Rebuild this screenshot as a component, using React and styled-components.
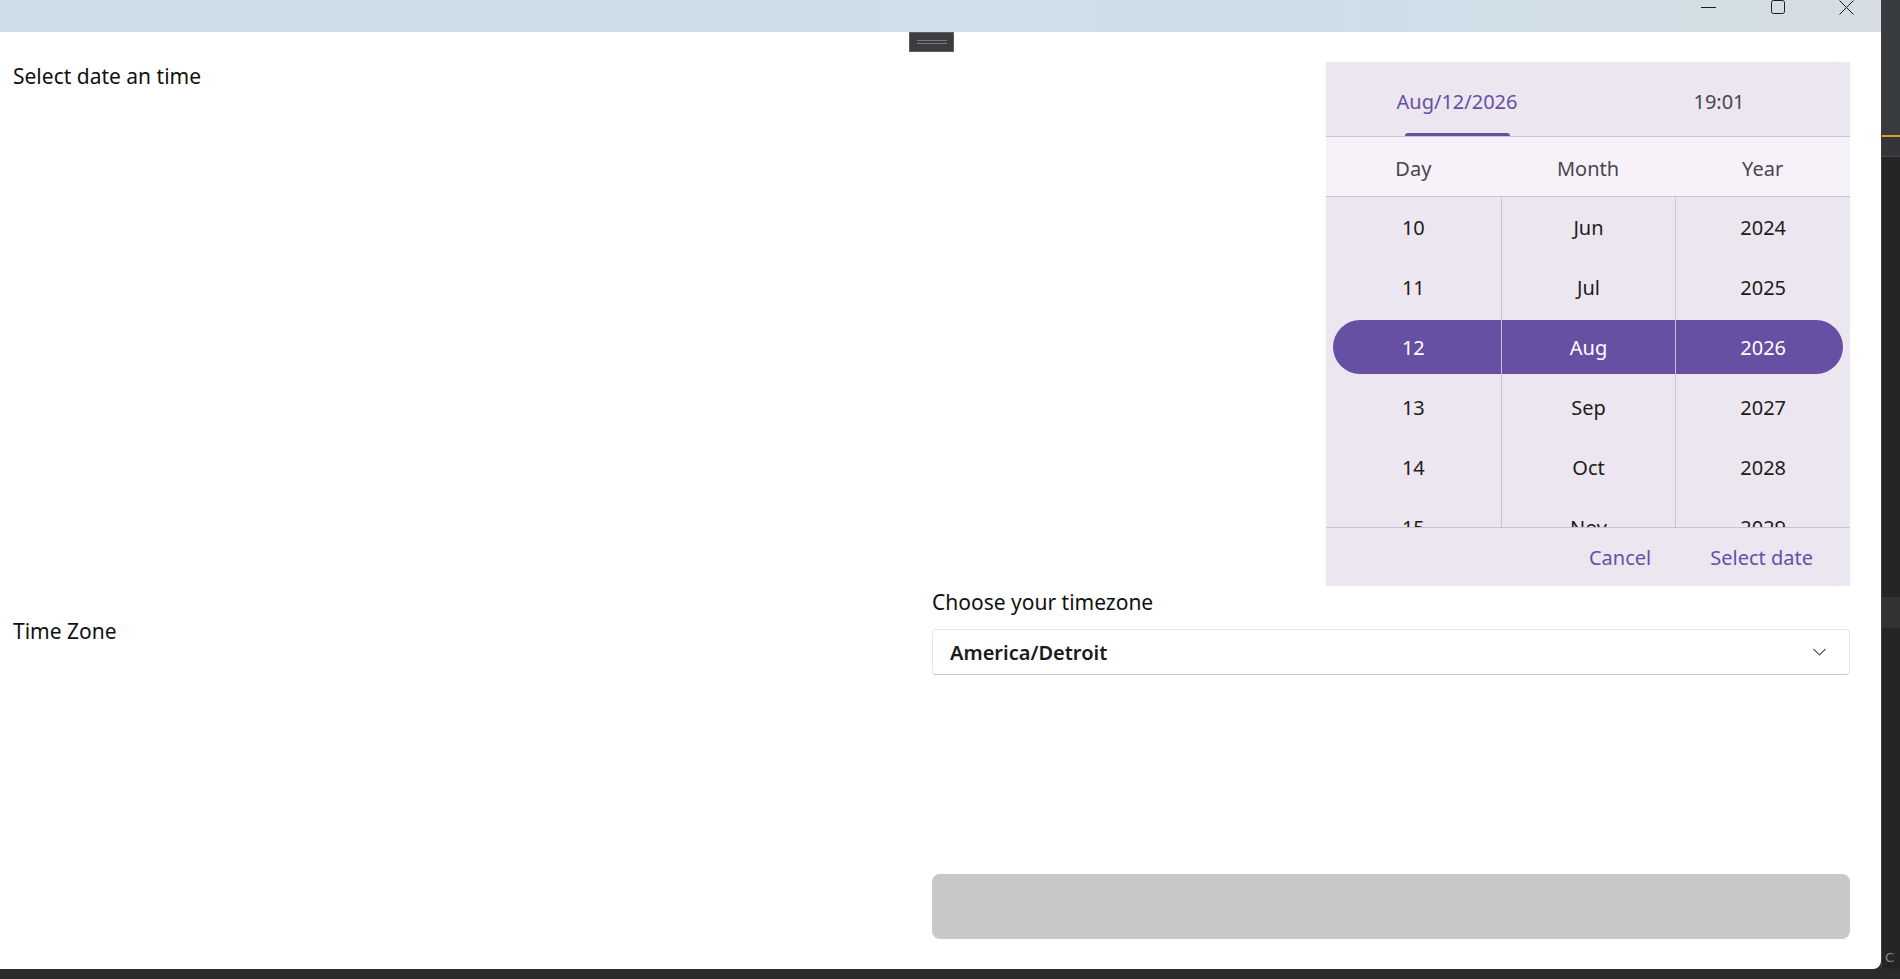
import React from 'react';
import styled, { createGlobalStyle } from 'styled-components';

const Global = createGlobalStyle`
  html, body { margin: 0; padding: 0; background: #2b2b2b; overflow: hidden; }
  body { font-family: "Noto Sans", "Open Sans", sans-serif; }
  * { box-sizing: border-box; }
`;

const Screen = styled.div`
  width: 1900px;
  height: 979px;
  display: grid;
  grid-template-columns: 1881px 19px;
  grid-template-rows: 969px 10px;
  background: #2b2b2b;
`;

const Window = styled.div`
  position: relative;
  display: flex;
  flex-direction: column;
  background: #ffffff;
  border-bottom-right-radius: 8px;
  overflow: hidden;
`;

const TitleBar = styled.div`
  height: 32px;
  flex: none;
  display: flex;
  justify-content: flex-end;
  align-items: flex-start;
  background: linear-gradient(90deg, #cfdcea 0%, #cddeea 70%, #d5dde2 100%);
`;

const ControlButton = styled.div`
  width: 69px;
  height: 15px;
  display: flex;
  align-items: center;
  justify-content: center;
  color: #1b1b1b;
`;

const DragHandle = styled.div`
  position: absolute;
  left: 909px;
  top: 32px;
  width: 45px;
  height: 20px;
  background: #3b3d40;
  border: 1px solid #5e5e5e;
  display: flex;
  flex-direction: column;
  align-items: center;
  justify-content: center;
  gap: 2px;
`;

const HandleLine = styled.div`
  width: 30px;
  height: 1px;
  background: #7a7a7a;
`;

const Content = styled.div`
  flex: 1;
  display: grid;
  grid-template-columns: 1fr 918px;
  grid-template-rows: auto auto 1fr auto;
  padding: 30px 31px 30px 13px;
`;

const FieldLabel = styled.div`
  font-size: 21px;
  line-height: 28px;
  color: #111111;
  align-self: ${p => (p.$center ? 'center' : 'start')};
`;

const Picker = styled.div`
  justify-self: end;
  width: 524px;
  background: #ece6f0;
  display: flex;
  flex-direction: column;
`;

const TabBar = styled.div`
  height: 75px;
  border-bottom: 1px solid #cac4d0;
  display: grid;
  grid-template-columns: 1fr 1fr;
`;

const Tab = styled.div`
  position: relative;
  display: flex;
  align-items: center;
  justify-content: center;
  padding-top: 4px;
  font-size: 20px;
  color: ${p => (p.$active ? '#6750a4' : '#49454f')};
`;

const TabIndicator = styled.div`
  position: absolute;
  bottom: 0;
  left: 50%;
  width: 105px;
  margin-left: -52px;
  height: 3px;
  border-radius: 3px 3px 0 0;
  background: #6750a4;
`;

const ColumnHeaders = styled.div`
  height: 60px;
  background: #f7f2fa;
  border-bottom: 1px solid #cac4d0;
  display: grid;
  grid-template-columns: repeat(3, 1fr);
`;

const ColumnHeader = styled.div`
  display: flex;
  align-items: center;
  justify-content: center;
  padding-top: 4px;
  font-size: 20px;
  color: #49454f;
`;

const Wheel = styled.div`
  height: 330px;
  overflow: hidden;
  display: grid;
  grid-template-columns: repeat(3, 1fr);
`;

const WheelColumn = styled.div`
  display: flex;
  flex-direction: column;
  border-left: ${p => (p.$first ? 'none' : '1px solid #cac4d0')};
`;

const Cell = styled.div`
  flex: none;
  height: ${p => (p.$selected ? '54px' : '60px')};
  margin: ${p => (p.$selected ? '3px 0' : '0')};
  display: flex;
  align-items: center;
  justify-content: center;
  font-size: 20px;
  color: ${p => (p.$selected ? '#ffffff' : '#1d1b20')};
  background: ${p => (p.$selected ? '#6750a4' : 'transparent')};
  ${p => p.$selected && p.$pos === 'start' && 'margin-left: 7px; padding-right: 7px; border-radius: 27px 0 0 27px;'}
  ${p => p.$selected && p.$pos === 'end' && 'margin-right: 7px; padding-left: 7px; border-radius: 0 27px 27px 0;'}
`;

const Footer = styled.div`
  height: 59px;
  border-top: 1px solid #cac4d0;
  display: flex;
  justify-content: flex-end;
  align-items: center;
  gap: 35px;
  padding-right: 25px;
`;

const TextButton = styled.div`
  padding: 6px 12px;
  font-size: 20px;
  color: #6750a4;
`;

const TimezoneBlock = styled.div`
  margin-top: 2px;
  display: flex;
  flex-direction: column;
  gap: 13px;
`;

const SelectBox = styled.div`
  height: 46px;
  border: 1px solid #e5e5e5;
  border-bottom-color: #c9c9c9;
  border-radius: 4px;
  background: #ffffff;
  display: flex;
  align-items: center;
  justify-content: space-between;
  padding: 0 23px 0 17px;
  font-size: 20px;
  font-weight: 600;
  color: #1a1a1a;
`;

const SubmitButton = styled.div`
  grid-column: 2;
  grid-row: 4;
  height: 65px;
  background: #c8c8c8;
  border-radius: 8px;
`;

const RightStrip = styled.div`
  display: flex;
  flex-direction: column;
  background: #252526;
  border-left: 1px solid #3f3f3f;
`;

const StripTop = styled.div`
  height: 135px;
  background: #383b3f;
`;

const StripAccent = styled.div`
  height: 2px;
  background: #d6a420;
`;

const StripBand = styled.div`
  height: 20px;
  background: #333538;
  border-bottom: 1px solid #4a4a4a;
`;

const StripBlock = styled.div`
  height: 31px;
  margin-top: 440px;
  background: #333333;
`;

const StripGlyph = styled.div`
  margin-top: auto;
  margin-bottom: 4px;
  padding-left: 3px;
  font-size: 13px;
  color: #8a8a8a;
  font-family: "DejaVu Sans", sans-serif;
`;

const days = ['10', '11', '12', '13', '14', '15'];
const months = ['Jun', 'Jul', 'Aug', 'Sep', 'Oct', 'Nov'];
const years = ['2024', '2025', '2026', '2027', '2028', '2029'];
const columns = [
  { items: days, pos: 'start' },
  { items: months, pos: 'mid' },
  { items: years, pos: 'end' },
];

export default function App() {
  return (
    <>
      <Global />
      <Screen>
        <Window>
          <TitleBar>
            <ControlButton>
              <svg width="15" height="15" viewBox="0 0 15 15">
                <line x1="0" y1="7.5" x2="15" y2="7.5" stroke="currentColor" strokeWidth="1" />
              </svg>
            </ControlButton>
            <ControlButton>
              <svg width="15" height="15" viewBox="0 0 15 15">
                <rect x="1.5" y="0.5" width="13" height="13" rx="2" fill="none" stroke="currentColor" strokeWidth="1" />
              </svg>
            </ControlButton>
            <ControlButton>
              <svg width="15" height="15" viewBox="0 0 15 15">
                <path d="M0.5 0.5 L14.5 14.5 M14.5 0.5 L0.5 14.5" stroke="currentColor" strokeWidth="1" />
              </svg>
            </ControlButton>
          </TitleBar>
          <DragHandle>
            <HandleLine />
            <HandleLine />
          </DragHandle>
          <Content>
            <FieldLabel>Select date an time</FieldLabel>
            <Picker>
              <TabBar>
                <Tab $active>
                  Aug/12/2026
                  <TabIndicator />
                </Tab>
                <Tab>19:01</Tab>
              </TabBar>
              <ColumnHeaders>
                <ColumnHeader>Day</ColumnHeader>
                <ColumnHeader>Month</ColumnHeader>
                <ColumnHeader>Year</ColumnHeader>
              </ColumnHeaders>
              <Wheel>
                {columns.map((col, ci) => (
                  <WheelColumn key={ci} $first={ci === 0}>
                    {col.items.map((it, i) => (
                      <Cell key={it} $selected={i === 2} $pos={col.pos}>
                        {it}
                      </Cell>
                    ))}
                  </WheelColumn>
                ))}
              </Wheel>
              <Footer>
                <TextButton>Cancel</TextButton>
                <TextButton>Select date</TextButton>
              </Footer>
            </Picker>
            <FieldLabel $center>Time Zone</FieldLabel>
            <TimezoneBlock>
              <FieldLabel>Choose your timezone</FieldLabel>
              <SelectBox>
                <span>America/Detroit</span>
                <svg width="13" height="8" viewBox="0 0 13 8">
                  <path d="M0.5 1 L6.5 7 L12.5 1" fill="none" stroke="#555555" strokeWidth="1.1" />
                </svg>
              </SelectBox>
            </TimezoneBlock>
            <SubmitButton />
          </Content>
        </Window>
        <RightStrip>
          <StripTop />
          <StripAccent />
          <StripBand />
          <StripBlock />
          <StripGlyph>C</StripGlyph>
        </RightStrip>
      </Screen>
    </>
  );
}
